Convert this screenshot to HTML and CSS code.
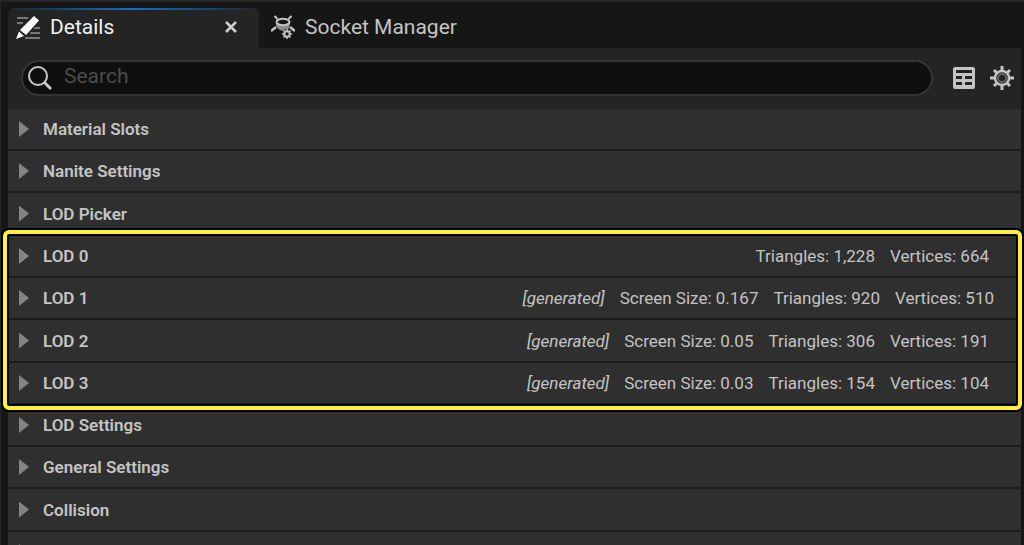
FILE: index.html
```
<!DOCTYPE html>
<html lang="en">
<head>
    <meta charset="UTF-8">
    <meta name="viewport" content="width=device-width, initial-scale=1.0">
    <title>Details</title>
    <link rel="stylesheet" href="styles.css">
</head>
<body>
    <div class="window">
        <!-- Tabs -->
        <div class="tabs">
            <div class="tab active">
                <svg class="tab-icon" viewBox="0 0 24 24" aria-hidden="true">
                    <path d="M1 3h11M1 8h6M17 13h7M14 18h10M9 23h15" stroke="#777" stroke-width="2"/>
                    <path d="M18 1l5 4.500L10 20l-6-5z" fill="#fff" stroke="#242424" stroke-width="3" paint-order="stroke"/>
                    <path d="M3 16.500l5 4.500-8 3z" fill="#fff"/>
                </svg>
                <span>Details</span>
                <button class="close" aria-label="Close tab">
                    <svg viewBox="0 0 12 12"><path d="M1 1l10 10M11 1L1 11" stroke="#d0d0d0" stroke-width="2.500"/></svg>
                </button>
            </div>
            <div class="tab">
                <svg class="tab-icon" viewBox="0 0 24 24" fill="none" stroke="#c4c4c4" stroke-width="2" aria-hidden="true">
                    <path d="M5 7v4q2 4 7 5h3q4-2 4-9z" fill="#8c8c8c" stroke="none"/>
                    <ellipse cx="12" cy="7" rx="6.500" ry="3.200" fill="#161616"/>
                    <path d="M3.500 1l3 3M20.500 1l-3 3"/>
                    <path d="M5 12l-5 4M19 12l5 4" stroke-width="2.500"/>
                    <circle cx="16" cy="19" r="5" fill="#161616" stroke="none"/>
                    <circle cx="16" cy="19" r="2.700"/>
                    <path d="M16 14v2M16 22v2M11 19h2M19 19h2M12.500 15.500l1.500 1.500M18 21l1.500 1.500M19.500 15.500l-1.500 1.500M14 21l-1.500 1.500" stroke-width="1.500"/>
                </svg>
                <span>Socket Manager</span>
            </div>
        </div>

        <div class="panel">
            <!-- Search bar -->
            <div class="toolbar">
                <label class="search">
                    <svg viewBox="0 0 24 24" fill="none" stroke="#c8c8c8" stroke-width="2" aria-hidden="true">
                        <circle cx="10" cy="10" r="9"/>
                        <path d="M16 16l7 7" stroke-width="3"/>
                    </svg>
                    <input type="text" placeholder="Search" aria-label="Search">
                </label>
                <button class="tool" aria-label="Property matrix">
                    <svg viewBox="0 0 24 24">
                        <rect x="1" y="1" width="22" height="22" rx="2" fill="#c4c4c4"/>
                        <path d="M4 4h16v3H4zM4 10h6v3H4zM13 10h7v3h-7zM4 16h6v3H4zM13 16h7v3h-7z" fill="#242424"/>
                    </svg>
                </button>
                <button class="tool" aria-label="Settings">
                    <svg viewBox="0 0 24 24" fill="none" stroke="#c4c4c4">
                        <circle cx="12" cy="12" r="7" stroke-width="2.500"/>
                        <circle cx="12" cy="12" r="4" stroke="#777" stroke-width="1.500"/>
                        <path d="M12 0v5M12 19v5M0 12h5M19 12h5M4 4l3 3M17 17l3 3M20 4l-3 3M7 17l-3 3" stroke-width="3"/>
                    </svg>
                </button>
            </div>

            <!-- Categories -->
            <div class="categories">
                <button class="row"><span class="name">Material Slots</span></button>
                <button class="row"><span class="name">Nanite Settings</span></button>
                <button class="row"><span class="name">LOD Picker</span></button>
            </div>

            <div class="categories highlighted">
                <button class="row">
                    <span class="name">LOD 0</span>
                    <span>Triangles: 1,228</span>
                    <span>Vertices: 664</span>
                </button>
                <button class="row wide">
                    <span class="name">LOD 1</span>
                    <i>[generated]</i>
                    <span>Screen Size: 0.167</span>
                    <span>Triangles: 920</span>
                    <span>Vertices: 510</span>
                </button>
                <button class="row">
                    <span class="name">LOD 2</span>
                    <i>[generated]</i>
                    <span>Screen Size: 0.05</span>
                    <span>Triangles: 306</span>
                    <span>Vertices: 191</span>
                </button>
                <button class="row">
                    <span class="name">LOD 3</span>
                    <i>[generated]</i>
                    <span>Screen Size: 0.03</span>
                    <span>Triangles: 154</span>
                    <span>Vertices: 104</span>
                </button>
            </div>

            <div class="categories">
                <button class="row"><span class="name">LOD Settings</span></button>
                <button class="row"><span class="name">General Settings</span></button>
                <button class="row"><span class="name">Collision</span></button>
                <div class="row"></div>
            </div>
        </div>
    </div>
</body>
</html>
```
FILE: styles.css
```
* {
    box-sizing: border-box;
}

body {
    margin: 0;
    height: 100vh;
    overflow: hidden;
    background-color: #161616;
    color: #c4c4c4;
    font-family: Roboto, sans-serif;
    font-size: 17px;
}

button {
    border: none;
    padding: 0;
    background: none;
    color: inherit;
    font: inherit;
}

svg {
    display: block;
}

.window {
    height: 100%;
    overflow: hidden;
    border-top: 2px solid #262626;
    border-left: 1px solid #262626;
    padding: 6px 3px 0 7px;
}

/* Tabs */
.tabs {
    display: flex;
    height: 40px;
    font-size: 21px;
}

.tab {
    display: flex;
    align-items: center;
    gap: 10px;
    padding: 0 12px 3px;
}

.tab.active {
    width: 251px;
    padding: 0 22px 3px 8px;
    border-radius: 6px 6px 0 0;
    background: linear-gradient(90deg, #242424, #0f6fd0 50%, #242424) top / 100% 2px no-repeat #242424;
    color: #f0f0f0;
}

.tab-icon {
    width: 24px;
    height: 24px;
}

.close {
    margin-left: auto;
}

.close svg {
    width: 12px;
    height: 12px;
}

/* Search bar */
.panel {
    background-color: #242424;
}

.toolbar {
    display: flex;
    align-items: center;
    gap: 14px;
    height: 61px;
    padding: 0 7px 2px 13px;
}

.search {
    display: flex;
    flex: 1;
    align-items: center;
    gap: 12px;
    height: 36px;
    margin-right: 5px;
    padding: 0 5px;
    border: 2px solid #343434;
    border-radius: 18px;
    background-color: #0f0f0f;
}

.search svg,
.tool svg {
    width: 24px;
    height: 24px;
}

.search input {
    flex: 1;
    padding: 0 0 3px;
    border: none;
    outline: none;
    background: none;
    color: #c4c4c4;
    font: inherit;
    font-size: 21px;
}

.search input::placeholder {
    color: #4c4c4c;
}

/* Categories */
.row {
    display: flex;
    align-items: center;
    gap: 15px;
    width: 100%;
    height: 42px;
    padding: 0 32px 0 11px;
    border-bottom: 2px solid #1c1c1c;
    background-color: #2f2f2f;
    text-align: left;
}

.row:nth-child(3) {
    height: 43px;
}

.row.wide {
    padding-right: 27px;
}

.row::before {
    content: "";
    width: 10px;
    height: 16px;
    margin-right: -1px;
    background-color: #848484;
    clip-path: polygon(0 0, 100% 50%, 0 100%);
}

.name {
    margin-right: auto;
    font-weight: 600;
}

/* Frame around the LOD rows */
.highlighted {
    position: relative;
}

.highlighted::after {
    content: "";
    position: absolute;
    inset: -6px -1px -5px -5px;
    border: 4px solid #fff23c;
    border-radius: 6px;
    box-shadow: 0 0 0 2px #000, inset 0 0 0 2px #000;
    pointer-events: none;
}
```
